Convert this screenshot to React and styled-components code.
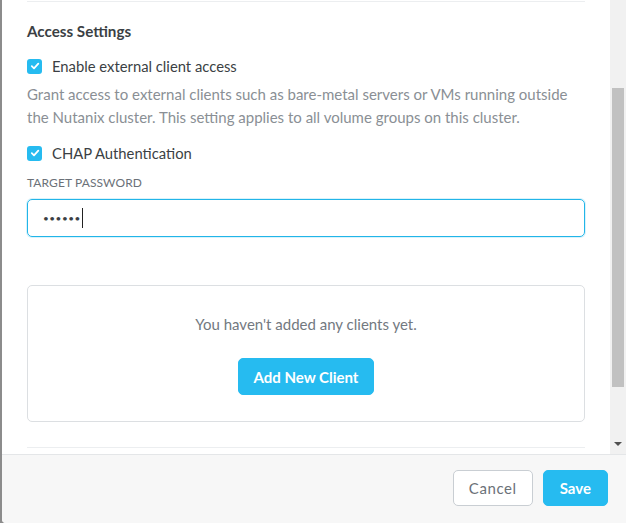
import styled, { createGlobalStyle } from "styled-components";

const Global = createGlobalStyle`
  html, body {
    margin: 0;
    padding: 0;
    background: #8c8c8c;
    font-family: Lato, "Open Sans", sans-serif;
  }
`;

const Page = styled.div`
  width: 626px;
  height: 523px;
  display: flex;
  padding-left: 2px;
  box-sizing: border-box;
  overflow: hidden;
`;

const Modal = styled.div`
  flex: 1;
  background: #fff;
  display: flex;
  flex-direction: column;
  border-bottom-left-radius: 4px;
  overflow: hidden;
`;

const BodyRow = styled.div`
  flex: 1;
  display: flex;
  min-height: 0;
`;

const Content = styled.div`
  flex: 1;
  padding: 0 25px;
  display: flex;
  flex-direction: column;
`;

const Divider = styled.div`
  height: 1px;
  background: #eceef0;
  margin-top: ${(p) => p.$top || 0}px;
`;

const SectionTitle = styled.h3`
  margin: 20px 0 0;
  font-size: 15.2px;
  font-weight: 700;
  color: #3b3f44;
  line-height: 18px;
`;

const CheckRow = styled.label`
  display: flex;
  align-items: center;
  gap: 10px;
  margin-top: ${(p) => p.$top}px;
  font-size: 14.8px;
  color: #3b3f44;
  line-height: 16px;
`;

const Box = styled.span`
  width: 15px;
  height: 15px;
  border-radius: 3px;
  background: #26bbf0;
  display: flex;
  align-items: center;
  justify-content: center;
`;

const Desc = styled.p`
  margin: 9px 0 0;
  font-size: 15px;
  line-height: 23px;
  color: #8a8f95;
`;

const FieldLabel = styled.div`
  margin-top: 15px;
  font-size: 12px;
  color: #6b7178;
  line-height: 14px;
  letter-spacing: 0.1px;
`;

const Input = styled.div`
  margin-top: 9px;
  height: 38px;
  box-sizing: border-box;
  border: 1px solid #22b5e8;
  border-radius: 5px;
  box-shadow: 0 0 0 1px rgba(38, 187, 240, 0.18);
  display: flex;
  align-items: center;
  padding-left: 15px;
  gap: 1px;
`;

const Dots = styled.span`
  font-size: 10px;
  letter-spacing: 0.5px;
  color: #3b3f44;
  line-height: 1;
`;

const Caret = styled.span`
  width: 1px;
  height: 20px;
  background: #222;
`;

const EmptyBox = styled.div`
  margin-top: 48px;
  height: 137px;
  box-sizing: border-box;
  border: 1px solid #dcdfe2;
  border-radius: 5px;
  display: flex;
  flex-direction: column;
  align-items: center;
  padding-top: 29px;
`;

const EmptyText = styled.div`
  font-size: 15px;
  color: #73797f;
  line-height: 18px;
`;

const Button = styled.button`
  font-family: Lato, "Open Sans", sans-serif;
  height: ${(p) => p.$h || 36}px;
  padding: 0 ${(p) => p.$px || 15}px;
  border-radius: 5px;
  font-size: 15px;
  cursor: pointer;
  border: 1px solid ${(p) => (p.$primary ? "#26bbf0" : "#c9ced3")};
  background: ${(p) => (p.$primary ? "#26bbf0" : "#fff")};
  color: ${(p) => (p.$primary ? "#fff" : "#6b7178")};
  font-weight: ${(p) => (p.$primary ? 700 : 400)};
  letter-spacing: ${(p) => (p.$primary ? 0 : 0.6)}px;
`;

const AddButton = styled(Button)`
  margin-top: 25px;
  font-size: 15px;
`;

const Track = styled.div`
  width: 16px;
  background: #f1f1f1;
  display: flex;
  flex-direction: column;
  align-items: center;
`;

const Thumb = styled.div`
  margin-top: 88px;
  width: 12px;
  height: 299px;
  background: #c1c1c1;
`;

const Arrow = styled.div`
  margin-top: auto;
  margin-bottom: 8px;
  width: 0;
  height: 0;
  border-left: 4px solid transparent;
  border-right: 4px solid transparent;
  border-top: 4px solid #505050;
`;

const Footer = styled.div`
  height: 69px;
  box-sizing: border-box;
  border-top: 1px solid #e4e6e8;
  background: #f7f7f7;
  display: flex;
  justify-content: flex-end;
  align-items: flex-start;
  padding: 15px 18px 0 0;
  gap: 10px;
`;

const Check = () => (
  <Box>
    <svg width="10" height="10" viewBox="0 0 10 10">
      <path d="M1.8 5.2 L4 7.3 L8.3 2.6" fill="none" stroke="#fff" strokeWidth="1.8" strokeLinecap="round" strokeLinejoin="round" />
    </svg>
  </Box>
);

export default function App() {
  return (
    <>
      <Global />
      <Page>
        <Modal>
          <BodyRow>
            <Content>
              <Divider $top={1} />
              <SectionTitle>Access Settings</SectionTitle>
              <CheckRow $top={18}>
                <Check />
                Enable external client access
              </CheckRow>
              <Desc>
                Grant access to external clients such as bare-metal servers or VMs running outside
                the Nutanix cluster. This setting applies to all volume groups on this cluster.
              </Desc>
              <CheckRow $top={16}>
                <Check />
                CHAP Authentication
              </CheckRow>
              <FieldLabel>TARGET PASSWORD</FieldLabel>
              <Input>
                <Dots>••••••</Dots>
                <Caret />
              </Input>
              <EmptyBox>
                <EmptyText>You haven't added any clients yet.</EmptyText>
                <AddButton $primary $h={37}>Add New Client</AddButton>
              </EmptyBox>
              <Divider $top={25} />
            </Content>
            <Track>
              <Thumb />
              <Arrow />
            </Track>
          </BodyRow>
          <Footer>
            <Button $px={15}>Cancel</Button>
            <Button $primary $px={16}>Save</Button>
          </Footer>
        </Modal>
      </Page>
    </>
  );
}
